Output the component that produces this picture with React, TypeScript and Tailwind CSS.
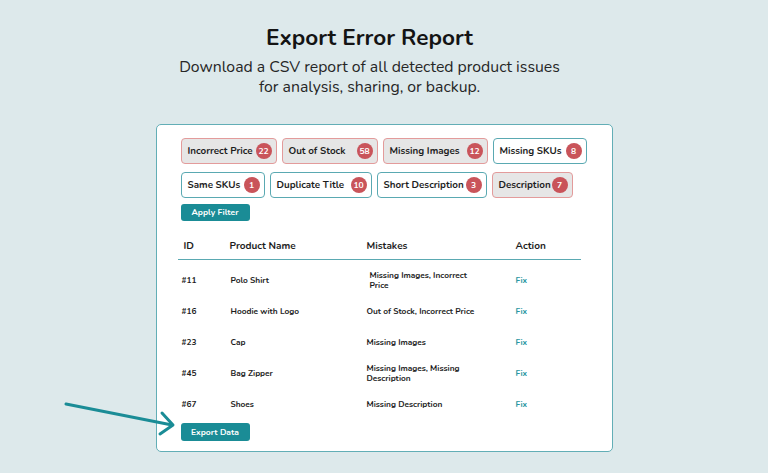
const filters = [
  [
    { label: "Incorrect Price", count: 22, active: true, w: "w-[96px]" },
    { label: "Out of Stock", count: 58, active: true, w: "w-[96px]" },
    { label: "Missing Images", count: 12, active: true, w: "w-[105px]" },
    { label: "Missing SKUs", count: 8, active: false, w: "w-[94px]" },
  ],
  [
    { label: "Same SKUs", count: 1, active: false, w: "w-[84px]" },
    { label: "Duplicate Title", count: 10, active: false, w: "w-[102px]" },
    { label: "Short Description", count: 3, active: false, w: "w-[110px]" },
    { label: "Description", count: 7, active: true, w: "w-[81px]" },
  ],
];

const rows = [
  { id: "#11", name: "Polo Shirt", mistakes: ["Missing Images, Incorrect", "Price"], indent: true },
  { id: "#16", name: "Hoodie with Logo", mistakes: ["Out of Stock, Incorrect Price"] },
  { id: "#23", name: "Cap", mistakes: ["Missing Images"] },
  { id: "#45", name: "Bag Zipper", mistakes: ["Missing Images, Missing", "Description"] },
  { id: "#67", name: "Shoes", mistakes: ["Missing Description"] },
];

function Chip({ label, count, active, w }: { label: string; count: number; active: boolean; w: string }) {
  return (
    <div
      className={
        "flex h-[26px] shrink-0 items-center justify-between whitespace-nowrap rounded-[4px] border pl-[6px] pr-[4px] " +
        w +
        " " +
        (active ? "border-[#e39b9b] bg-[#e6e6e6]" : "border-[#5aa9b2] bg-white")
      }
    >
      <span className="text-[9.8px] font-bold text-[#1d1d1d]">{label}</span>
      <span className="flex h-[16px] w-[16px] items-center justify-center rounded-full bg-[#c9545a] text-[8.5px] font-bold text-white">
        {count}
      </span>
    </div>
  );
}

export default function App() {
  return (
    <div
      className="relative flex min-h-[473px] w-full flex-col items-center bg-[#dde9eb] text-[#1d1d1d]"
      style={{ fontFamily: "Nunito, Lato, 'Noto Sans', sans-serif" }}
    >
      <div className="flex flex-col items-center pr-[29px]">
        <h1 className="mt-[24px] text-[22.5px] font-bold leading-[28px] text-[#141414]">Export Error Report</h1>
        <p className="mt-[5px] text-center text-[15.8px] leading-[20px] text-[#262626]">
          Download a CSV report of all detected product issues
          <br />
          for analysis, sharing, or backup.
        </p>
      </div>

      <div className="mt-[27px] w-[457px] rounded-[5px] border border-[#62aeb6] bg-white pb-[10px] pl-[24px] pr-[30px] pt-[13px]">
        <div className="flex flex-col gap-[8px]">
          {filters.map((line, i) => (
            <div key={i} className="flex gap-[5px]">
              {line.map((f) => (
                <Chip key={f.label} {...f} />
              ))}
            </div>
          ))}
        </div>

        <button className="mt-[6px] block h-[17px] w-[69px] rounded-[3px] bg-[#1a8c96] text-[8.5px] font-bold text-white">
          Apply Filter
        </button>

        <div className="ml-[-3px] mr-[1px] mt-[15px] grid h-[24px] grid-cols-[52px_137px_149px_1fr] items-center border-b border-[#5aa9b2] pb-[2px] text-[10px] font-bold">
          <span className="pl-[6px]">ID</span>
          <span>Product Name</span>
          <span>Mistakes</span>
          <span>Action</span>
        </div>

        <div className="mt-[5px]">
          {rows.map((r) => (
            <div key={r.id} className="grid h-[31px] grid-cols-[49px_136px_149px_1fr] items-center pl-[1px] text-[8.3px] font-bold leading-[10px]">
              <span>{r.id}</span>
              <span>{r.name}</span>
              <span className={r.indent ? "pl-[3px]" : ""}>
                {r.mistakes.map((m, i) => (
                  <span key={i} className="block">
                    {m}
                  </span>
                ))}
              </span>
              <span className="text-[#2a97a2]">Fix</span>
            </div>
          ))}
        </div>

        <button className="mt-[3px] block h-[18px] w-[69px] rounded-[3px] bg-[#1a8c96] text-[8.5px] font-bold text-white">
          Export Data
        </button>
      </div>

      <svg className="pointer-events-none absolute left-0 top-0" width="768" height="473" viewBox="0 0 768 473">
        <g stroke="#1a8c96" strokeWidth="3" strokeLinecap="round" fill="none">
          <path d="M66 404 L172 425" />
          <path d="M162 413 L173 425 L160 434" strokeLinejoin="round" />
        </g>
      </svg>
    </div>
  );
}
